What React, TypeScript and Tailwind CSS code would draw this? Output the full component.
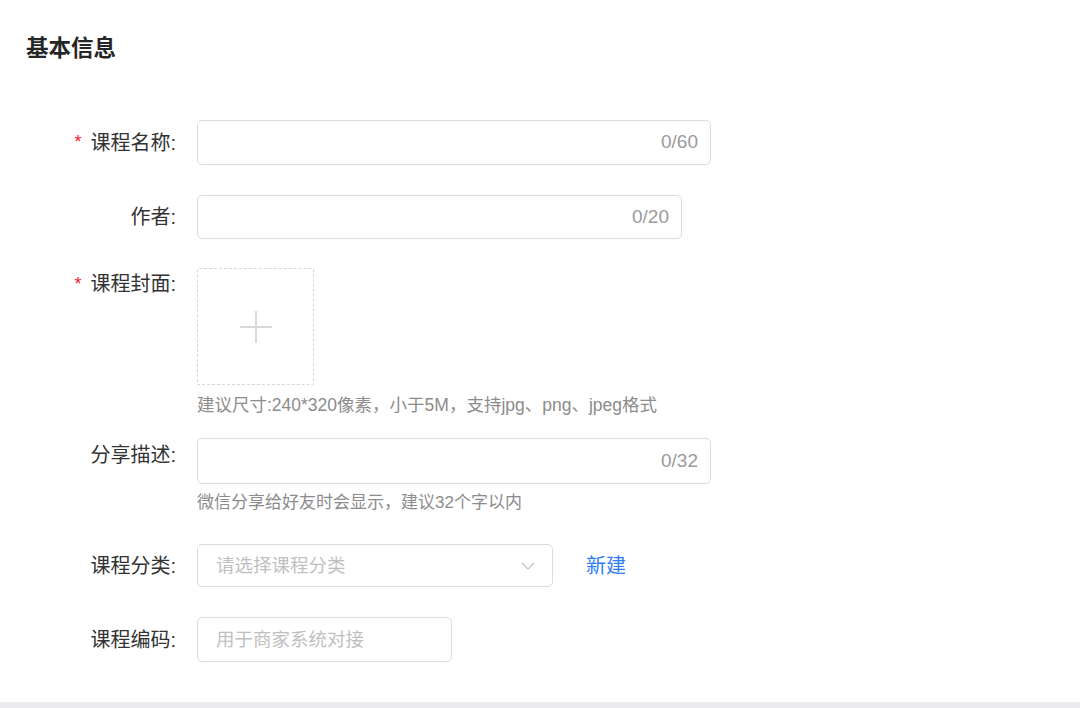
const font = { fontFamily: '"Liberation Sans", "Noto Sans CJK SC", sans-serif' };

function Label({ text, required, h }: { text: string; required?: boolean; h: string }) {
  return (
    <div className={`w-[176px] shrink-0 flex items-center justify-end text-[20px] text-[#333333] ${h}`}>
      {required && <span className="mr-[9px] text-[18px] text-[#f5222d]">*</span>}
      <span>{text}:</span>
    </div>
  );
}

function CountInput({ count, w, h }: { count: string; w: string; h: string }) {
  return (
    <div className={`${w} ${h} flex items-center justify-end rounded-[5px] border border-[#dcdcdc] bg-white pr-[12px]`}>
      <span className="text-[19px] text-[#9a9a9a]">{count}</span>
    </div>
  );
}

export default function App() {
  return (
    <div className="min-h-[708px] bg-white flex flex-col" style={font}>
      <div className="pl-[26px] pt-[34px]">
        <h2 className="text-[22.5px] leading-[30px] font-bold text-[#262626]">基本信息</h2>
      </div>

      <div className="mt-[56px] flex flex-col">
        <div className="flex items-start gap-[21px] mb-[30px]">
          <Label text="课程名称" required h="h-[45px]" />
          <CountInput count="0/60" w="w-[514px]" h="h-[45px]" />
        </div>

        <div className="flex items-start gap-[21px] mb-[29px]">
          <Label text="作者" h="h-[44px]" />
          <CountInput count="0/20" w="w-[485px]" h="h-[44px]" />
        </div>

        <div className="flex items-start gap-[21px] mb-[21px]">
          <Label text="课程封面" required h="h-[32px]" />
          <div className="flex flex-col">
            <div className="w-[117px] h-[117px] flex items-center justify-center border border-dashed border-[#d6d6d6] rounded-[2px]">
              <svg width="34" height="34" viewBox="0 0 34 34" fill="none" stroke="#d9d9d9" strokeWidth="2">
                <line x1="17" y1="1" x2="17" y2="33" />
                <line x1="1" y1="17" x2="33" y2="17" />
              </svg>
            </div>
            <p className="mt-[8px] text-[17.5px] leading-[24px] text-[#8c8c8c]">
              建议尺寸:240*320像素，小于5M，支持jpg、png、jpeg格式
            </p>
          </div>
        </div>

        <div className="flex items-start gap-[21px] mb-[29px]">
          <Label text="分享描述" h="h-[34px]" />
          <div className="flex flex-col">
            <CountInput count="0/32" w="w-[514px]" h="h-[46px]" />
            <p className="mt-[7px] text-[17px] leading-[24px] text-[#8c8c8c]">微信分享给好友时会显示，建议32个字以内</p>
          </div>
        </div>

        <div className="flex items-center gap-[21px] mb-[30px]">
          <Label text="课程分类" h="h-[43px]" />
          <div className="w-[356px] h-[43px] flex items-center justify-between rounded-[5px] border border-[#dcdcdc] pl-[18px] pr-[17px]">
            <span className="text-[18.5px] text-[#bfbfbf]">请选择课程分类</span>
            <svg width="14" height="8" viewBox="0 0 14 8" fill="none" stroke="#c4c4c4" strokeWidth="1.2">
              <polyline points="1,1 7,7 13,1" />
            </svg>
          </div>
          <span className="ml-[12px] text-[20px] text-[#2f7cf6]">新建</span>
        </div>

        <div className="flex items-start gap-[21px]">
          <Label text="课程编码" h="h-[45px]" />
          <div className="w-[255px] h-[45px] flex items-center rounded-[5px] border border-[#dcdcdc] pl-[18px]">
            <span className="text-[18.5px] text-[#bfbfbf]">用于商家系统对接</span>
          </div>
        </div>
      </div>

      <div className="flex-1" />
      <div className="h-[6px] bg-[#ebebf0]" />
    </div>
  );
}
